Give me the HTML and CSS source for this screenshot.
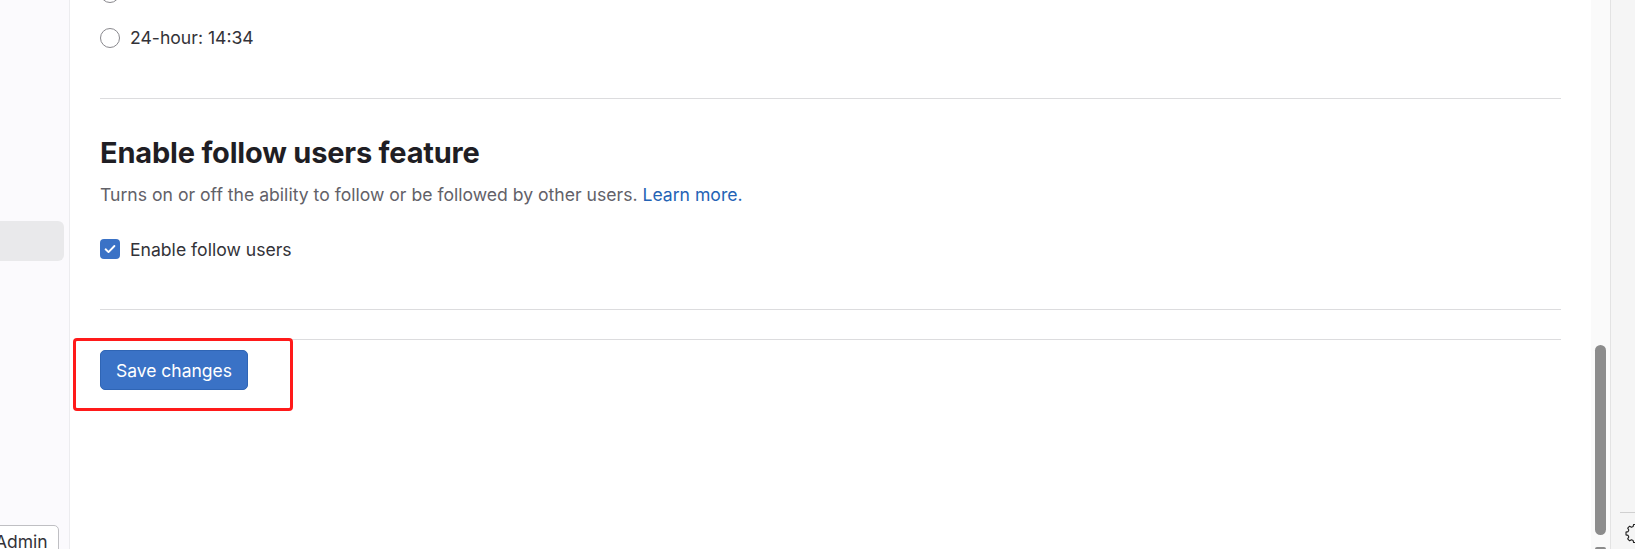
FILE: index.html
```html
<!DOCTYPE html>
<html>

<head>
    <title>Preferences</title>
    <link rel="stylesheet" href="styles.css">
</head>

<body>
    <aside class="sidebar">
        <div class="nav-active"></div>
        <button class="admin-btn">Admin</button>
    </aside>

    <main class="content">
        <div class="radio-list">
            <label class="radio-row"><span class="radio"></span> 12-hour: 2:34 PM</label>
            <label class="radio-row"><span class="radio"></span> 24-hour: 14:34</label>
        </div>

        <hr class="divider first">

        <section class="setting">
            <h4 class="setting-title">Enable follow users feature</h4>
            <p class="setting-desc">Turns on or off the ability to follow or be followed by other users. <a href="#">Learn more.</a></p>
            <label class="check-row">
                <span class="checkbox">
                    <svg width="14" height="14" viewBox="0 0 14 14"><path d="M2.6 7.3l2.9 2.8 5.9-6.1" fill="none" stroke="#fff" stroke-width="1.9" stroke-linecap="round" stroke-linejoin="round"/></svg>
                </span>
                Enable follow users
            </label>
        </section>

        <hr class="divider second">

        <div class="form-actions">
            <div class="highlight-wrap">
                <button class="btn-confirm">Save changes</button>
                <span class="highlight"></span>
            </div>
        </div>
    </main>

    <div class="scroll-track">
        <div class="scroll-thumb"></div>
        <div class="scroll-end"></div>
    </div>

    <aside class="side-panel">
        <div class="panel-line"></div>
        <svg class="panel-icon" width="22" height="22" viewBox="0 0 22 22">
            <path d="M11 3.5l1.4 0 .5 2.1 1.6.7 1.9-1.1 1.9 1.9-1.1 1.9.7 1.6 2.1.5 0 2.8-2.1.5-.7 1.6 1.1 1.9-1.9 1.9-1.9-1.1-1.6.7-.5 2.1-2.8 0-.5-2.1-1.6-.7-1.9 1.1-1.9-1.9 1.1-1.9-.7-1.6-2.1-.5 0-2.8 2.1-.5.7-1.6-1.1-1.9 1.9-1.9 1.9 1.1 1.6-.7.5-2.1z" fill="none" stroke="#222" stroke-width="1.1" stroke-linejoin="round"/>
        </svg>
    </aside>
</body>

</html>
```

FILE: styles.css
```css
* {
    box-sizing: border-box;
}

html, body {
    margin: 0;
    height: 549px;
    overflow: hidden;
}

body {
    display: flex;
    font-family: Inter, "Noto Sans", "Liberation Sans", sans-serif;
    font-size: 17.6px;
    color: #333238;
    background: #fff;
}

/* left nav */
.sidebar {
    width: 70px;
    flex-shrink: 0;
    background: #fbfafd;
    border-right: 1px solid #ececef;
    display: flex;
    flex-direction: column;
    padding-top: 221px;
}

.nav-active {
    width: 64px;
    height: 40px;
    background: #e9e9eb;
    border-radius: 0 6px 6px 0;
}

.admin-btn {
    margin-top: auto;
    margin-bottom: -14px;
    margin-left: -12px;
    width: 71px;
    height: 38px;
    border: 1px solid #bfbfc3;
    border-radius: 5px;
    background: #fff;
    font-family: inherit;
    font-size: 17.5px;
    color: #333238;
    text-align: left;
    padding: 0 0 4px 6px;
    line-height: 1;
}

/* main column */
.content {
    flex: 1;
    padding: 0 30px;
    min-width: 0;
}

.radio-list {
    display: flex;
    flex-direction: column;
    gap: 21px;
    margin-top: -19px;
}

.radio-row {
    display: flex;
    align-items: center;
    gap: 10px;
    height: 24px;
    line-height: 24px;
}

.radio {
    width: 20px;
    height: 20px;
    border: 1px solid #89888d;
    border-radius: 50%;
    background: #fff;
}

.divider {
    border: none;
    border-top: 1px solid #dcdcde;
    margin: 0;
}

.divider.first {
    margin-top: 48px;
}

.divider.second {
    margin-top: 48px;
}

.setting-title {
    margin: 36px 0 0;
    font-size: 29px;
    line-height: 36px;
    font-weight: 700;
    color: #1f1e24;
    letter-spacing: -0.2px;
}

.setting-desc {
    margin: 12px 0 0;
    line-height: 24px;
    color: #626168;
}

.setting-desc a {
    color: #2463b5;
    text-decoration: none;
}

.check-row {
    display: flex;
    align-items: center;
    gap: 10px;
    height: 24px;
    margin-top: 30px;
}

.checkbox {
    width: 20px;
    height: 20px;
    border-radius: 4px;
    background: #3a72c6;
    display: flex;
    align-items: center;
    justify-content: center;
}

.form-actions {
    margin-top: 29px;
    border-top: 1px solid #dcdcde;
    padding-top: 10px;
}

.highlight-wrap {
    position: relative;
    display: inline-block;
}

.btn-confirm {
    display: block;
    width: 148px;
    height: 40px;
    border: 1px solid #2f65b5;
    border-radius: 5px;
    background: #3a72c6;
    color: #fff;
    font-family: inherit;
    font-size: 17.5px;
    padding: 0;
}

/* red annotation box */
.highlight {
    position: absolute;
    left: -27px;
    top: -12px;
    width: 220px;
    height: 73px;
    border: 3px solid #ff1a1a;
    border-radius: 4px;
}

/* fake scrollbar */
.scroll-track {
    width: 20px;
    flex-shrink: 0;
    background: #fafafa;
    border-right: 1px solid #e3e3e3;
    padding: 345px 0 0 4px;
}

.scroll-thumb {
    width: 11px;
    height: 190px;
    background: #8c8c8c;
    border-radius: 6px;
}

.scroll-end {
    width: 11px;
    height: 6px;
    margin-top: 12px;
    background: #8c8c8c;
    border-radius: 2px;
}

.side-panel {
    width: 24px;
    flex-shrink: 0;
    background: #f5f5f5;
    position: relative;
}

.panel-line {
    margin: 512px 0 0 9px;
    border-top: 1px solid #d0d0d0;
}

.panel-icon {
    position: absolute;
    left: 13px;
    top: 521px;
}
```
